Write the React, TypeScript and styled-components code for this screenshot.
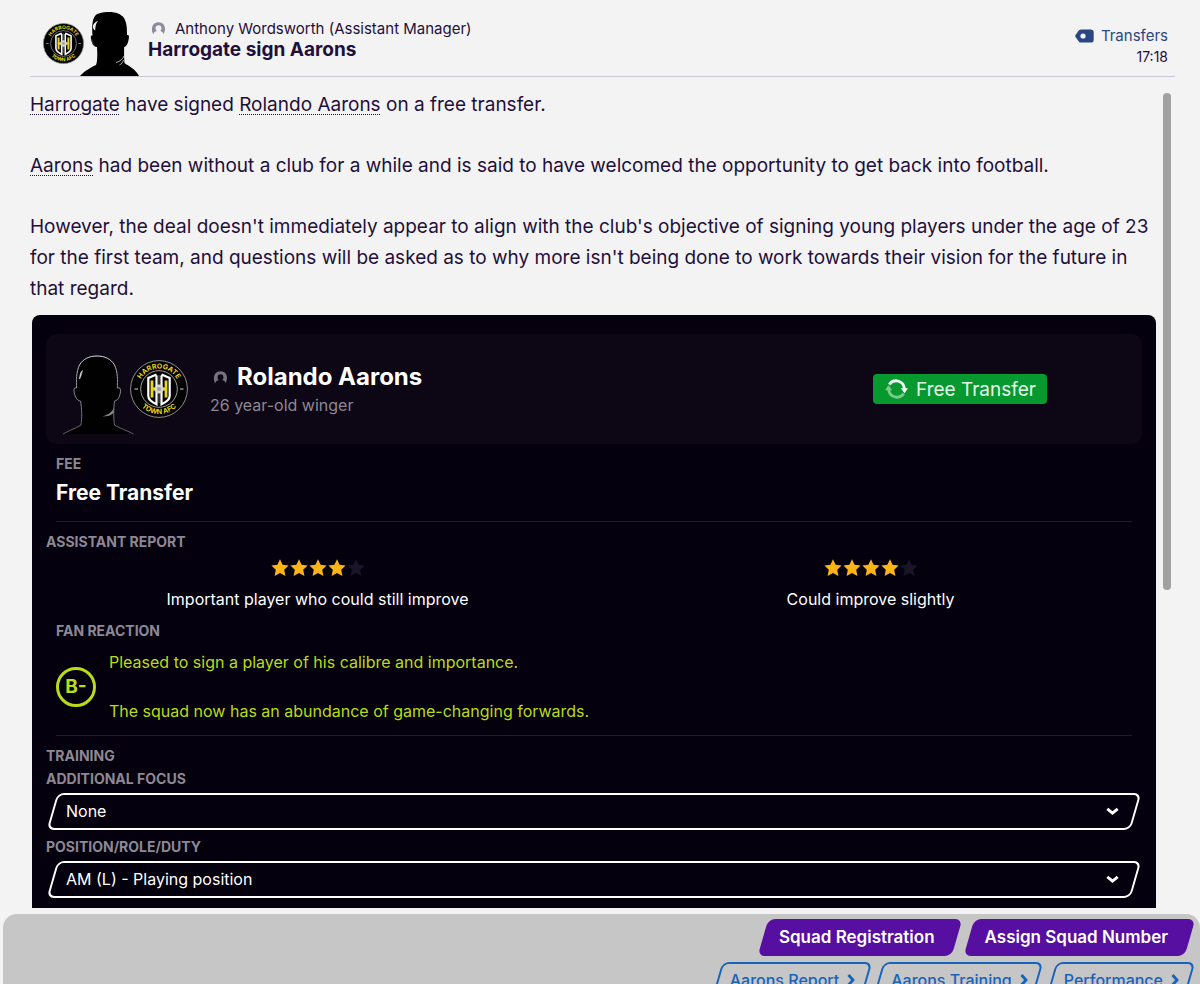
import React, { useId } from "react";
import styled, { createGlobalStyle } from "styled-components";

const color = {
  page: "#f3f3f3",
  ink: "#1f0f3b",
  line: "#c9c8d6",
  link: "#2c4583",
  card: "#04000d",
  cardRaised: "#0d0614",
  muted: "#8d8894",
  rule: "#201c2b",
  lime: "#b9dc14",
  green: "#06992f",
  star: "#fdb515",
  starOff: "#191428",
  footer: "#c6c6c6",
  purple: "#560fa0",
  blue: "#1663bd",
};

const GlobalStyle = createGlobalStyle`
  *, *::before, *::after { box-sizing: border-box; }
  body {
    margin: 0;
    background: ${color.page};
    color: ${color.ink};
    font-family: Inter, "Liberation Sans", sans-serif;
  }
  button, select { font: inherit; }
  h1, h2, h3, p { margin: 0; }
`;

const Page = styled.div`
  display: flex;
  flex-direction: column;
  height: 100vh;
  overflow: hidden;
`;

/* Message header */

const Header = styled.header`
  display: flex;
  flex: none;
  margin: 0 25px 0 30px;
  padding: 11px 7px 0 13px;
  border-bottom: 1px solid ${color.line};
`;

const Avatars = styled.div`
  display: flex;
  align-items: center;
  margin-right: 9px;
`;

const HeaderText = styled.div`
  flex: 1;
  min-width: 0;
  padding-top: 7px;
`;

const Sender = styled.p`
  display: flex;
  align-items: center;
  gap: 10px;
  padding-left: 4px;
  font-size: 15px;
  line-height: 21px;
`;

const Subject = styled.h1`
  font-size: 19px;
  font-weight: 700;
  line-height: 21px;
`;

const HeaderMeta = styled.div`
  display: flex;
  flex-direction: column;
  align-items: flex-end;
  padding-top: 14px;
  font-size: 14px;
  line-height: 21px;
`;

const CategoryLink = styled.a`
  display: flex;
  align-items: center;
  gap: 7px;
  color: ${color.link};
  font-size: 15px;
  text-decoration: none;
`;

/* Message body */

const Body = styled.main`
  display: flex;
  flex: 1;
  min-height: 0;
  gap: 7px;
  padding: 0 29px 0 30px;
`;

const Article = styled.article`
  flex: 1;
  min-width: 0;
  padding: 12px 0 40px;
  overflow-y: auto;
  scrollbar-width: none;
`;

const ScrollTrack = styled.div`
  flex: none;
  width: 8px;
  padding-top: 16px;
`;

const ScrollThumb = styled.div`
  height: 61%;
  border-radius: 4px;
  background: #a1a1a1;
`;

const Copy = styled.div`
  display: grid;
  gap: 30px;
  font-size: 19px;
  line-height: 31px;
`;

const NameLink = styled.a`
  color: inherit;
  text-decoration: underline dotted 1px;
  text-underline-offset: 3px;
`;

const Card = styled.section`
  margin: 11px 0 0 2px;
  padding: 19px 0 20px;
  border-radius: 8px;
  background: ${color.card};
  color: #fff;
`;

const PlayerPanel = styled.div`
  display: flex;
  align-items: center;
  min-height: 110px;
  margin: 0 14px;
  padding: 0 95px 0 16px;
  border-radius: 10px;
  background: ${color.cardRaised};
`;

const PlayerInfo = styled.div`
  flex: 1;
  padding: 2px 0 0 22px;
`;

const PlayerName = styled.h2`
  display: flex;
  align-items: center;
  gap: 10px;
  padding-left: 4px;
  font-size: 24px;
  font-weight: 700;
  line-height: 30px;
`;

const PlayerDetail = styled.p`
  color: ${color.muted};
  font-size: 16px;
  line-height: 26px;
`;

const Pill = styled.span`
  display: flex;
  align-items: center;
  gap: 8px;
  height: 30px;
  padding: 0 11px 0 12px;
  border-radius: 4px;
  background: ${color.green};
  color: #e6fbe9;
  font-size: 19px;
`;

const Section = styled.section<{ $ruled?: boolean }>`
  margin: 0 ${(p) => (p.$ruled ? 24 : 14)}px;
  padding: 10px 0 ${(p) => (p.$ruled ? 12 : 0)}px;
  border-bottom: ${(p) => (p.$ruled ? `1px solid ${color.rule}` : "0")};
`;

const Label = styled.h3`
  color: ${color.muted};
  font-size: 14px;
  font-weight: 700;
  line-height: 20px;
`;

const Fee = styled.p`
  padding: 5px 0 2px;
  font-size: 21px;
  font-weight: 700;
  line-height: 28px;
`;

const Ratings = styled.div`
  display: grid;
  grid-template-columns: 1fr 1fr;
  margin: 0 -5px;
  padding-top: 7px;
`;

const Rating = styled.div`
  display: flex;
  flex-direction: column;
  align-items: center;
  gap: 10px;
  font-size: 16px;
  line-height: 24px;
`;

const Stars = styled.div`
  display: flex;
  gap: 1px;
`;

const Reaction = styled.div`
  display: flex;
  align-items: center;
  gap: 13px;
  padding-top: 9px;
  color: ${color.lime};
  font-size: 16px;
  line-height: 24px;
`;

const ReactionText = styled.div`
  display: grid;
  gap: 25px;
`;

const Grade = styled.span`
  display: grid;
  flex: none;
  place-items: center;
  width: 40px;
  height: 40px;
  border: 3px solid ${color.lime};
  border-radius: 50%;
  font-size: 19px;
  font-weight: 700;
`;

const Field = styled.label`
  display: block;
  padding-top: 3px;
  & + & { padding-top: 7px; }
`;

const FieldLabel = styled(Label).attrs({ as: "span" })`
  display: block;
`;

const SelectShape = styled.span`
  position: relative;
  display: flex;
  align-items: center;
  height: 37px;
  margin: 4px 6px 0;
  &::before {
    content: "";
    position: absolute;
    inset: 0;
    border: 2px solid #fff;
    border-radius: 7px;
    transform: skewX(-16deg);
    pointer-events: none;
  }
  svg { flex: none; margin: 0 17px 0 -30px; pointer-events: none; }
`;

const Select = styled.select`
  flex: 1;
  height: 100%;
  padding: 0 14px 2px;
  border: 0;
  background: transparent;
  color: #fff;
  font-size: 16px;
  appearance: none;
  option { color: ${color.ink}; }
`;

/* Action bar */

const Actions = styled.footer`
  display: flex;
  flex: 0 0 70px;
  flex-direction: column;
  gap: 6px;
  margin: 6px 0 0 3px;
  padding: 5px 10px 0;
  border-radius: 14px 14px 0 0;
  background: ${color.footer};
  overflow: hidden;
`;

const ActionRow = styled.div`
  display: flex;
  flex: none;
  justify-content: flex-end;
  gap: 12px;
`;

const ActionButton = styled.button<{ $primary?: boolean }>`
  position: relative;
  z-index: 0;
  display: flex;
  align-items: center;
  gap: 8px;
  height: 37px;
  padding: ${(p) => (p.$primary ? "0 22px 2px 16px" : "0 11px 2px 13px")};
  border: 0;
  background: none;
  color: ${(p) => (p.$primary ? "#fff" : color.blue)};
  font-size: ${(p) => (p.$primary ? 17 : 16)}px;
  font-weight: ${(p) => (p.$primary ? 600 : 500)};
  white-space: nowrap;
  cursor: pointer;
  &::before {
    content: "";
    position: absolute;
    z-index: -1;
    inset: 0;
    border: 2px solid ${(p) => (p.$primary ? color.purple : color.blue)};
    border-radius: 7px;
    background: ${(p) => (p.$primary ? color.purple : "transparent")};
    transform: skewX(-16deg);
  }
`;

/* Drawings */

function Crest({ size }: { size: number }) {
  const id = useId();
  return (
    <svg width={size} height={size} viewBox="0 0 58 58" role="img" aria-label="Harrogate Town AFC">
      <defs>
        <path id={`${id}t`} d="M8.5 29a20.5 20.5 0 0 1 41 0" />
        <path id={`${id}b`} d="M4 29a25 25 0 0 0 50 0" />
      </defs>
      <circle cx="29" cy="29" r="28.4" fill="#020202" stroke="#8d8d88" strokeWidth="1" />
      <circle cx="29" cy="29" r="18.3" fill="#020202" stroke="#9b9b96" strokeWidth="1" />
      <g fill="#e9d51f" fontFamily="Inter, sans-serif" fontWeight="700" fontSize="7" textAnchor="middle">
        <text><textPath href={`#${id}t`} startOffset="50%">HARROGATE</textPath></text>
        <text><textPath href={`#${id}b`} startOffset="50%">TOWN AFC</textPath></text>
      </g>
      <path d="M4.500 29h3.500M50 29h3.500" stroke="#8d8d88" strokeWidth="1.600" />
      <g fill="none">
        <path d="M22 20.500v17M36 20.500v17" stroke="#e9d51f" strokeWidth="2.800" />
        <path d="M21 29h16" stroke="#e9d51f" strokeWidth="3.200" />
        <path d="M26.500 14.500L18.300 18v18q0 4.500 8.200 8.200V15.500" stroke="#fff" strokeWidth="2.200" />
        <path d="M31.500 14.500L39.700 18v18q0 4.500-8.200 8.200V15.500" stroke="#fff" strokeWidth="2.200" />
        <path d="M29 15v28" stroke="#77777a" strokeWidth=".8" />
      </g>
      <circle cx="29" cy="29" r="4.500" fill="#d8d8d2" />
      <circle cx="29" cy="29" r="2" fill="#a2a29c" />
    </svg>
  );
}

const HeaderPortrait = styled.svg`
  margin-left: -5px;
`;

function StaffSilhouette() {
  return (
    <HeaderPortrait width="60" height="65" viewBox="0 0 60 65" aria-hidden="true">
      <path
        d="M1 65c4-5 12-9 16-11 1.500-3 1.500-11 1-18-4 0-5.500-5-6-8-.5-3 0-4 1.500-3.500C13 16 13 9 16 5c2-3 8-4 14-4 7 0 12 2 15 6 3 5 3 11 3 17 2-.5 2.300 1 1.700 4-.6 4-2 7.500-4.500 8-.2 5-.2 11 .3 16 4 3 11 6 14.500 13z"
        fill="#000"
      />
      <path d="M14 14.500c1-2.500 3-4 5-4.500-2 2.500-2.500 4.500-2.800 9.500-1.500-1-2.500-2-2.200-5z" fill="#f0f0f0" />
      <path d="M45 45c-1 3-4 5.500-8 6.500M44.500 49c-1 2.500-2 4-4 5" fill="none" stroke="#bdbdbd" strokeWidth=".9" />
      <path d="M13 28c0 3 1 5.500 3 6.500" fill="none" stroke="#666" strokeWidth=".6" />
    </HeaderPortrait>
  );
}

const PlayerPortrait = styled.svg`
  align-self: flex-end;
  margin: 0 -4px 9px 0;
`;

function PlayerSilhouette() {
  const id = useId();
  return (
    <PlayerPortrait width="72" height="80" viewBox="0 0 72 80" aria-hidden="true">
      <defs>
        <linearGradient id={id} x1="0" y1="0" x2="0" y2="1">
          <stop offset="0" stopColor="#dcdcdf" />
          <stop offset=".3" stopColor="#98989d" />
          <stop offset="1" stopColor="#5f5d65" />
        </linearGradient>
      </defs>
      <path
        d="M1 79c5-3 13-6 18-9 1-6 1-16-.5-24-4 0-6-6-6.500-9.500-.4-3 .5-4 2.500-3.500C14.500 26 14 17 17.500 10 21 4 27 1 35 1s14 3 17.500 9c3.500 7 3 16 2.800 23 2.700-.5 3.700.5 3.200 3.500-.5 4-2 9-6 9.500-1 8-1 18 0 24 4 3 14 6 19 9z"
        fill="#010101"
      />
      <path
        d="M1 79c5-3 13-6 18-9 1-6 1-16-.5-24-4 0-6-6-6.500-9.500-.4-3 .5-4 2.500-3.500C14.500 26 14 17 17.500 10 21 4 27 1 35 1s14 3 17.500 9c3.500 7 3 16 2.800 23 2.700-.5 3.700.5 3.200 3.500-.5 4-2 9-6 9.500-1 8-1 18 0 24 4 3 14 6 19 9"
        fill="none"
        stroke={`url(#${id})`}
        strokeWidth="1"
      />
      <path d="M17.500 24c.3-4 1-7 3-8.500-1.200 3-1.300 6-3 8.500z" fill="#dedede" stroke="#dedede" strokeWidth=".6" />
      <path d="M52 53c-2 4-6 7-11.500 8.500 5 0 9-1 11-3.500z" fill="#85858a" />
    </PlayerPortrait>
  );
}

function PersonIcon({ fill, size }: { fill: string; size: number }) {
  return (
    <svg width={size} height={size} viewBox="0 0 14 14" aria-hidden="true">
      <path
        d="M1.800 13.200A7 7 0 0 1 0 7.300C0 3.300 3 .3 7 .3s7 3 7 7c0 2.300-.7 4.400-1.800 5.900-.2-2-1.200-3-3.400-3.400A3.100 3.100 0 0 0 10.100 6.600 3.100 3.100 0 0 0 3.900 6.600 3.100 3.100 0 0 0 5.200 9.800C3 10.200 2 11.200 1.800 13.200z"
        fill={fill}
      />
    </svg>
  );
}

function TagIcon() {
  return (
    <svg width="19" height="14" viewBox="0 0 19 14" aria-hidden="true">
      <path d="M6 .4h9.500q3.200 0 3.200 3.200v6.800q0 3.200-3.200 3.200H6Q4.800 13.600 4 12.700L.7 8.200Q-.1 7 .7 5.800L4 1.300Q4.800.4 6 .4z" fill={color.link} />
      <circle cx="8" cy="7" r="2.600" fill={color.page} />
    </svg>
  );
}

function CycleIcon() {
  return (
    <svg width="23" height="20" viewBox="0 0 23 20" fill="none" aria-hidden="true">
      <path d="M4.300 5.500A8.200 8.200 0 0 1 19.300 10" stroke="#f4fff5" strokeWidth="2.800" />
      <path d="M15.800 9.300h7.200l-3.400 5z" fill="#f4fff5" />
      <path d="M18.700 14.500A8.200 8.200 0 0 1 3.700 10" stroke="#7fca8b" strokeWidth="2.800" />
      <path d="M7.200 11.300H0l3.400-5z" fill="#7fca8b" />
    </svg>
  );
}

function Star({ on }: { on: boolean }) {
  return (
    <svg width="18" height="18" viewBox="0 0 18 18" aria-hidden="true">
      <path
        d="M9 .3l2.600 5.500 6 .8-4.400 4.200 1.200 6.100L9 14l-5.400 2.900 1.200-6.100L.4 6.600l6-.8z"
        fill={on ? color.star : color.starOff}
      />
    </svg>
  );
}

function ChevronDown() {
  return (
    <svg width="13" height="9" viewBox="0 0 13 9" fill="none" aria-hidden="true">
      <path d="M1.300 1.800l5.200 4.400 5.200-4.400" stroke="#fff" strokeWidth="2.900" />
    </svg>
  );
}

function ChevronRight() {
  return (
    <svg width="8" height="12" viewBox="0 0 8 12" fill="none" aria-hidden="true">
      <path d="M1.500 1l4.500 5-4.500 5" stroke={color.blue} strokeWidth="2.800" />
    </svg>
  );
}

/* Parts */

function StarRating({ value, text }: { value: number; text: string }) {
  return (
    <Rating>
      <Stars role="img" aria-label={`${value} out of 5 stars`}>
        {[1, 2, 3, 4, 5].map((n) => (
          <Star key={n} on={n <= value} />
        ))}
      </Stars>
      <p>{text}</p>
    </Rating>
  );
}

function SelectField({ label, value }: { label: string; value: string }) {
  return (
    <Field>
      <FieldLabel>{label}</FieldLabel>
      <SelectShape>
        <Select defaultValue={value}>
          <option>{value}</option>
        </Select>
        <ChevronDown />
      </SelectShape>
    </Field>
  );
}

export default function App() {
  return (
    <Page>
      <GlobalStyle />
      <Header>
        <Avatars>
          <Crest size={41} />
          <StaffSilhouette />
        </Avatars>
        <HeaderText>
          <Sender>
            <PersonIcon fill="#8f8a9b" size={13} />
            Anthony Wordsworth (Assistant Manager)
          </Sender>
          <Subject>Harrogate sign Aarons</Subject>
        </HeaderText>
        <HeaderMeta>
          <CategoryLink href="#transfers">
            <TagIcon />
            Transfers
          </CategoryLink>
          <time>17:18</time>
        </HeaderMeta>
      </Header>

      <Body>
        <Article>
          <Copy>
            <p>
              <NameLink href="#harrogate">Harrogate</NameLink> have signed{" "}
              <NameLink href="#aarons">Rolando Aarons</NameLink> on a free transfer.
            </p>
            <p>
              <NameLink href="#aarons">Aarons</NameLink> had been without a club for a while and is said to have
              welcomed the opportunity to get back into football.
            </p>
            <p>
              However, the deal doesn't immediately appear to align with the club's objective of signing young players
              under the age of 23 for the first team, and questions will be asked as to why more isn't being done to
              work towards their vision for the future in that regard.
            </p>
          </Copy>

          <Card>
            <PlayerPanel>
              <PlayerSilhouette />
              <Crest size={58} />
              <PlayerInfo>
                <PlayerName>
                  <PersonIcon fill="#77727f" size={13} />
                  Rolando Aarons
                </PlayerName>
                <PlayerDetail>26 year-old winger</PlayerDetail>
              </PlayerInfo>
              <Pill>
                <CycleIcon />
                Free Transfer
              </Pill>
            </PlayerPanel>

            <Section $ruled>
              <Label>FEE</Label>
              <Fee>Free Transfer</Fee>
            </Section>

            <Section>
              <Label>ASSISTANT REPORT</Label>
              <Ratings>
                <StarRating value={4} text="Important player who could still improve" />
                <StarRating value={4} text="Could improve slightly" />
              </Ratings>
            </Section>

            <Section $ruled>
              <Label>FAN REACTION</Label>
              <Reaction>
                <Grade>B-</Grade>
                <ReactionText>
                  <p>Pleased to sign a player of his calibre and importance.</p>
                  <p>The squad now has an abundance of game-changing forwards.</p>
                </ReactionText>
              </Reaction>
            </Section>

            <Section>
              <Label>TRAINING</Label>
              <SelectField label="ADDITIONAL FOCUS" value="None" />
              <SelectField label="POSITION/ROLE/DUTY" value="AM (L) - Playing position" />
            </Section>
          </Card>
        </Article>
        <ScrollTrack>
          <ScrollThumb />
        </ScrollTrack>
      </Body>

      <Actions>
        <ActionRow>
          <ActionButton $primary>Squad Registration</ActionButton>
          <ActionButton $primary>Assign Squad Number</ActionButton>
        </ActionRow>
        <ActionRow>
          {["Aarons Report", "Aarons Training", "Performance"].map((name) => (
            <ActionButton key={name}>
              {name}
              <ChevronRight />
            </ActionButton>
          ))}
        </ActionRow>
      </Actions>
    </Page>
  );
}
